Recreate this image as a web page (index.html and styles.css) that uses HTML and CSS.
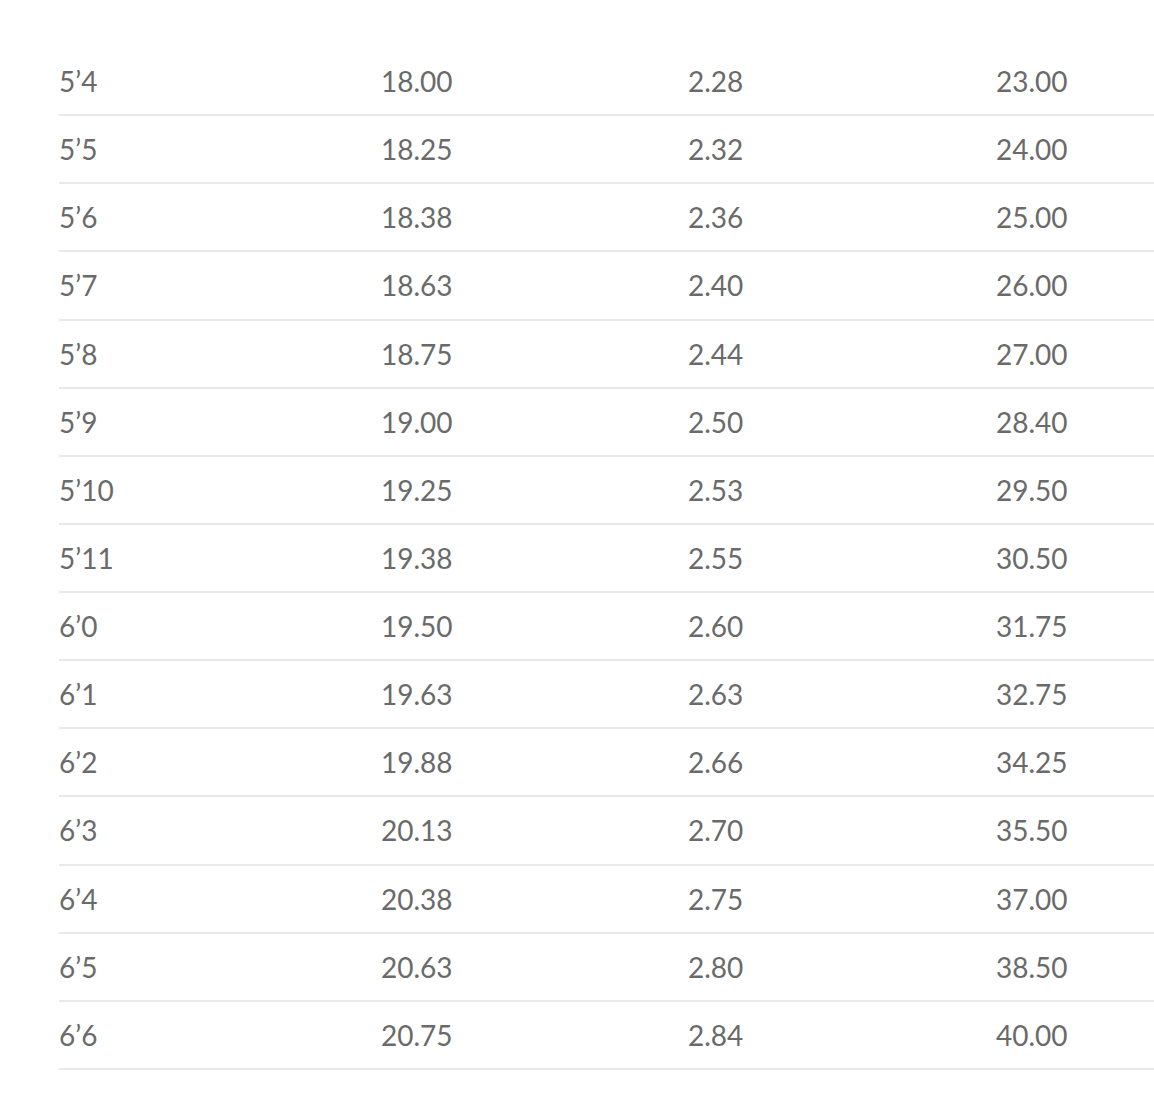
FILE: index.html
```html
<!DOCTYPE html>
<html>
<head>
<meta charset="utf-8">
<link rel="stylesheet" href="styles.css">
</head>
<body>
<div class="table">
  <div class="row"><span>5’4</span><span>18.00</span><span>2.28</span><span>23.00</span></div>
  <div class="row"><span>5’5</span><span>18.25</span><span>2.32</span><span>24.00</span></div>
  <div class="row"><span>5’6</span><span>18.38</span><span>2.36</span><span>25.00</span></div>
  <div class="row"><span>5’7</span><span>18.63</span><span>2.40</span><span>26.00</span></div>
  <div class="row"><span>5’8</span><span>18.75</span><span>2.44</span><span>27.00</span></div>
  <div class="row"><span>5’9</span><span>19.00</span><span>2.50</span><span>28.40</span></div>
  <div class="row"><span>5’10</span><span>19.25</span><span>2.53</span><span>29.50</span></div>
  <div class="row"><span>5’11</span><span>19.38</span><span>2.55</span><span>30.50</span></div>
  <div class="row"><span>6’0</span><span>19.50</span><span>2.60</span><span>31.75</span></div>
  <div class="row"><span>6’1</span><span>19.63</span><span>2.63</span><span>32.75</span></div>
  <div class="row"><span>6’2</span><span>19.88</span><span>2.66</span><span>34.25</span></div>
  <div class="row"><span>6’3</span><span>20.13</span><span>2.70</span><span>35.50</span></div>
  <div class="row"><span>6’4</span><span>20.38</span><span>2.75</span><span>37.00</span></div>
  <div class="row"><span>6’5</span><span>20.63</span><span>2.80</span><span>38.50</span></div>
  <div class="row"><span>6’6</span><span>20.75</span><span>2.84</span><span>40.00</span></div>
</div>
</body>
</html>
```
FILE: styles.css
```css
html, body {
  margin: 0;
  padding: 0;
  background: #ffffff;
}
body {
  padding: 48px 0 0 59px;
  font-family: "Lato", "Noto Sans", sans-serif;
  color: #6a6a6a;
  overflow: hidden;
}
.table {
  display: flex;
  flex-direction: column;
}
.row {
  display: grid;
  grid-template-columns: 322px 307px 308px 1fr;
  height: 68.14px;
  box-sizing: border-box;
  border-bottom: 2px solid #e9e9e9;
  align-items: center;
  font-size: 28px;
  line-height: 34px;
}
.row span {
  display: block;
}
```
